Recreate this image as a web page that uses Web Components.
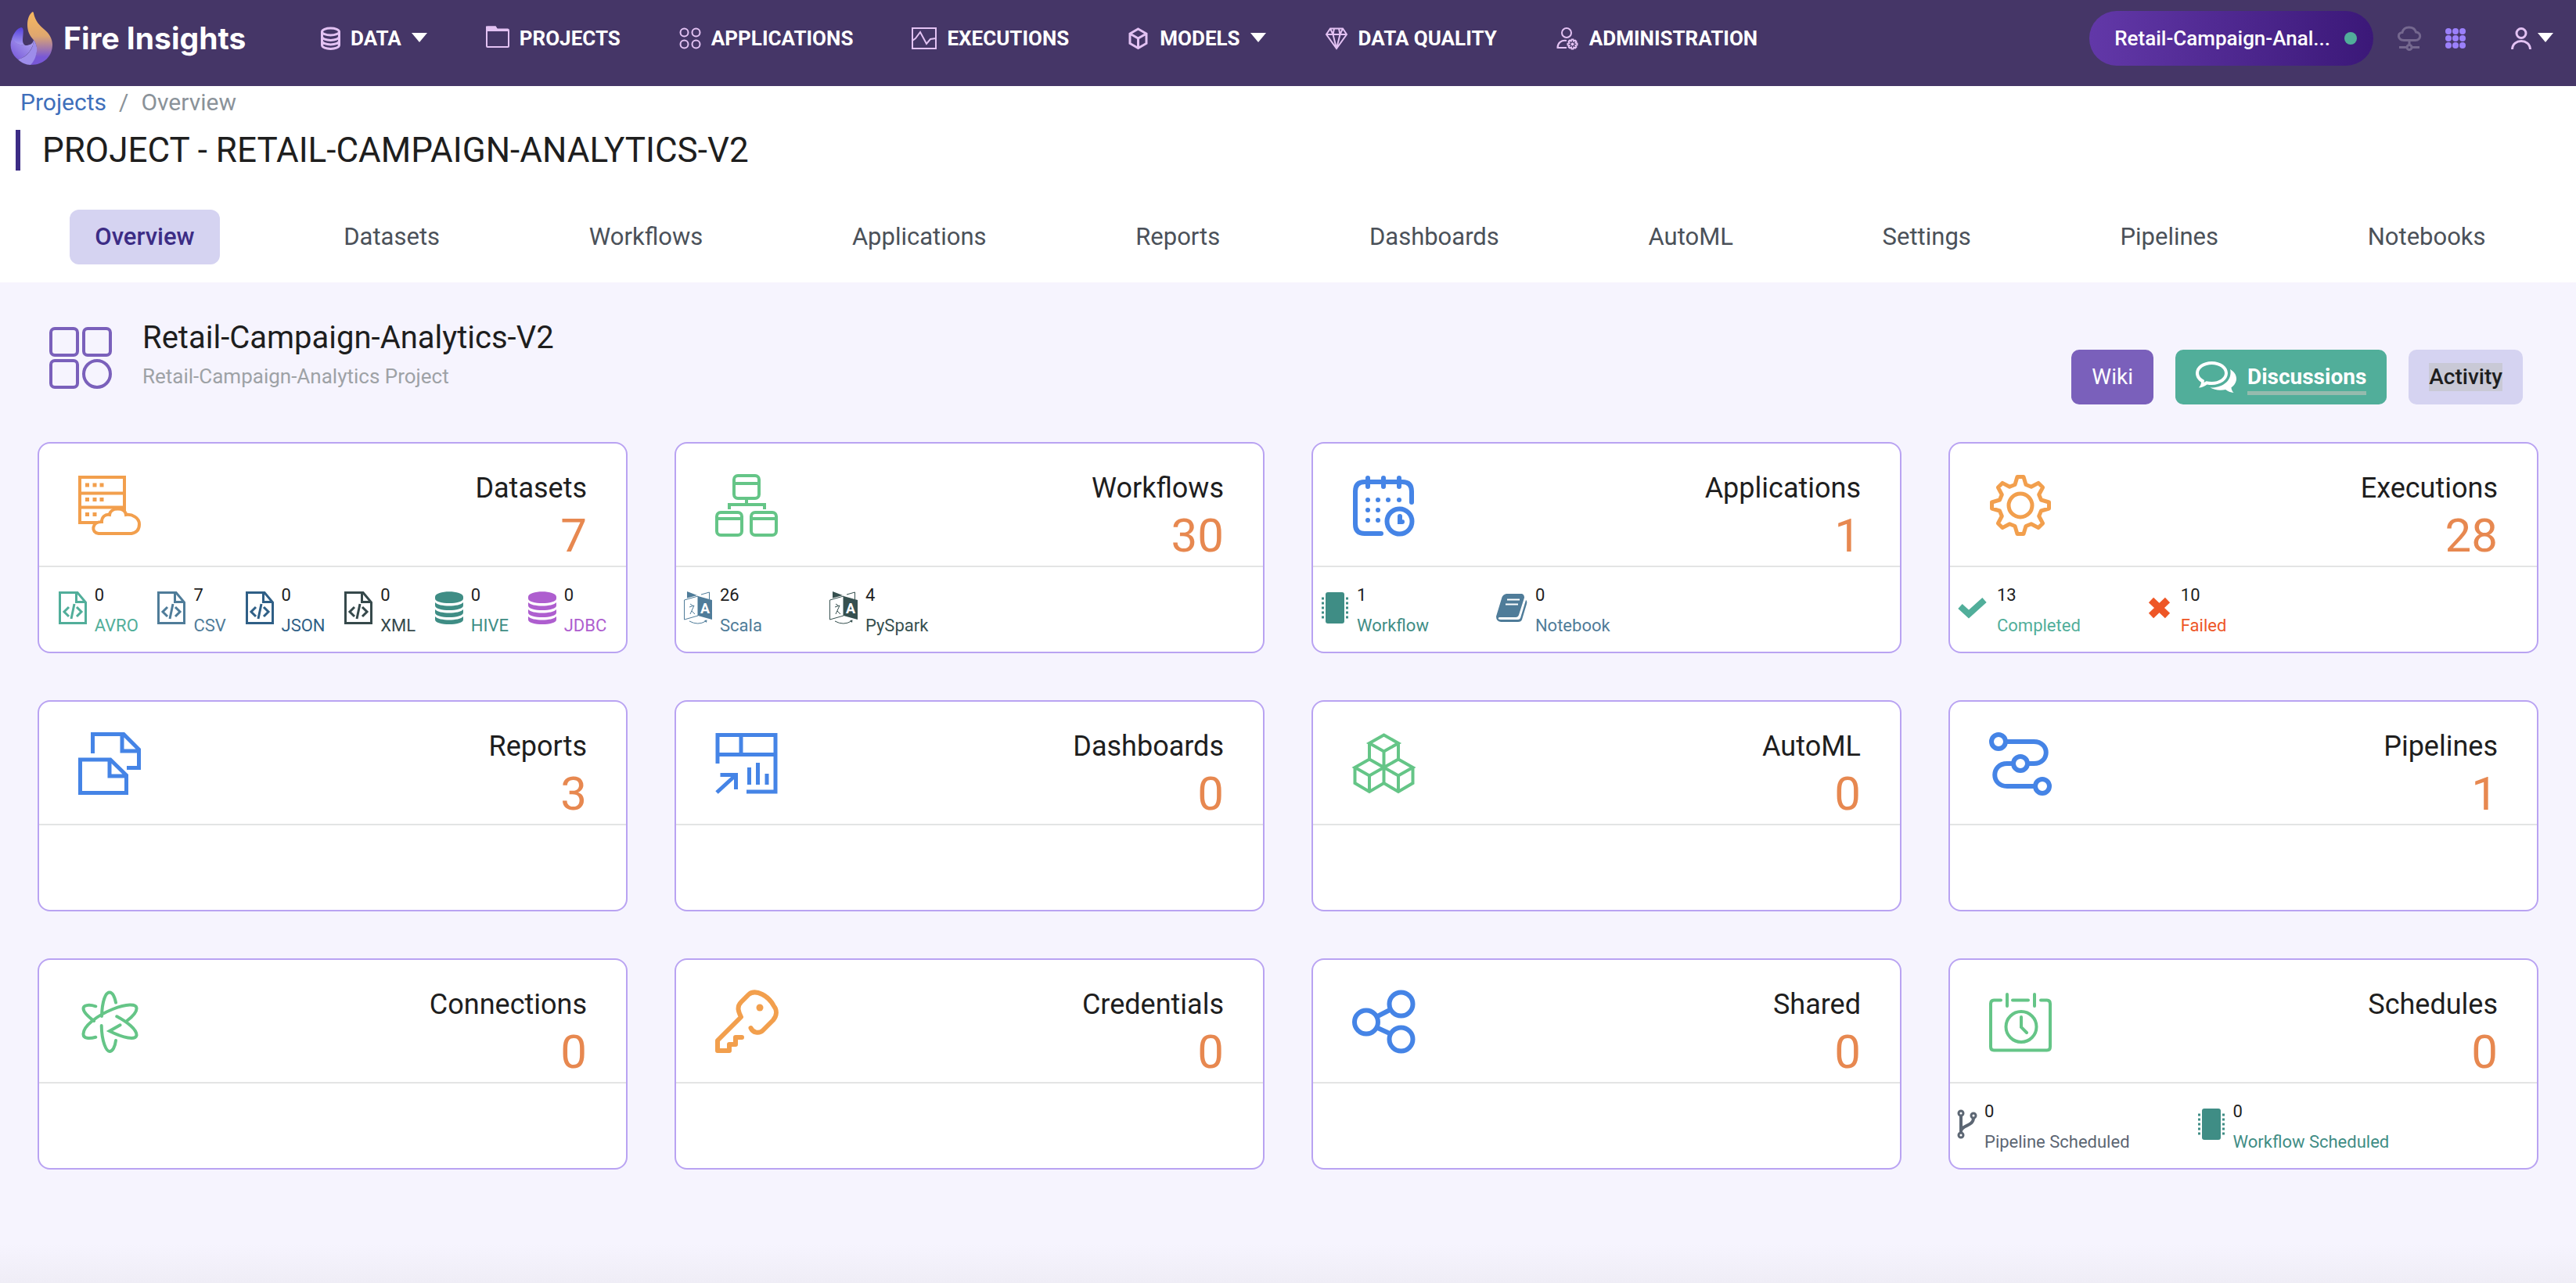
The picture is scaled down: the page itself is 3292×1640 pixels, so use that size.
<!DOCTYPE html>
<html lang="en">
<head>
<meta charset="utf-8">
<title>Fire Insights - Project Overview</title>
<style>
  html { height: 100%; }
  body { margin: 0; min-height: 100%; display: flex; flex-direction: column; background: #fff; color: #1e1e1e; font-family: Roboto, "Liberation Sans", sans-serif; }
  project-overview { flex: 1; }
</style>
</head>
<body>
<app-header>
  <nav-item slot="nav" icon="database" menu>DATA</nav-item>
  <nav-item slot="nav" icon="folder">PROJECTS</nav-item>
  <nav-item slot="nav" icon="apps">APPLICATIONS</nav-item>
  <nav-item slot="nav" icon="activity">EXECUTIONS</nav-item>
  <nav-item slot="nav" icon="cube" menu>MODELS</nav-item>
  <nav-item slot="nav" icon="diamond">DATA QUALITY</nav-item>
  <nav-item slot="nav" icon="admin">ADMINISTRATION</nav-item>
</app-header>
<page-heading parent="Projects" current="Overview">PROJECT - RETAIL-CAMPAIGN-ANALYTICS-V2</page-heading>
<tab-bar>
  <tab-link active>Overview</tab-link>
  <tab-link>Datasets</tab-link>
  <tab-link>Workflows</tab-link>
  <tab-link>Applications</tab-link>
  <tab-link>Reports</tab-link>
  <tab-link>Dashboards</tab-link>
  <tab-link>AutoML</tab-link>
  <tab-link>Settings</tab-link>
  <tab-link>Pipelines</tab-link>
  <tab-link>Notebooks</tab-link>
</tab-bar>
<project-overview name="Retail-Campaign-Analytics-V2" description="Retail-Campaign-Analytics Project">
  <summary-card icon="datasets" color="#f29f4d" label="Datasets" count="7" spread>
    <stat-item icon="file" color="#51ae9a" value="0">AVRO</stat-item>
    <stat-item icon="file" color="#4f7c99" value="7">CSV</stat-item>
    <stat-item icon="file" color="#2f5f86" value="0">JSON</stat-item>
    <stat-item icon="file" color="#36494b" value="0">XML</stat-item>
    <stat-item icon="stack" color="#3f8d85" value="0">HIVE</stat-item>
    <stat-item icon="stack" color="#ae5ecf" value="0">JDBC</stat-item>
  </summary-card>
  <summary-card icon="workflows" color="#65c587" label="Workflows" count="30">
    <stat-item icon="translate" color="#4f7c99" value="26">Scala</stat-item>
    <stat-item icon="translate" color="#36504f" value="4">PySpark</stat-item>
  </summary-card>
  <summary-card icon="applications" color="#4584e6" label="Applications" count="1">
    <stat-item icon="chip" color="#3f8d85" value="1">Workflow</stat-item>
    <stat-item icon="book" color="#4f7c99" value="0">Notebook</stat-item>
  </summary-card>
  <summary-card icon="gear" color="#f29f4d" label="Executions" count="28">
    <stat-item icon="check" color="#51ae9a" value="13">Completed</stat-item>
    <stat-item icon="cross" color="#ee5626" value="10">Failed</stat-item>
  </summary-card>
  <summary-card icon="reports" color="#4584e6" label="Reports" count="3"></summary-card>
  <summary-card icon="dashboards" color="#4584e6" label="Dashboards" count="0"></summary-card>
  <summary-card icon="automl" color="#65c587" label="AutoML" count="0"></summary-card>
  <summary-card icon="pipelines" color="#4584e6" label="Pipelines" count="1"></summary-card>
  <summary-card icon="connections" color="#65c587" label="Connections" count="0"></summary-card>
  <summary-card icon="key" color="#f29f4d" label="Credentials" count="0"></summary-card>
  <summary-card icon="shared" color="#4584e6" label="Shared" count="0"></summary-card>
  <summary-card icon="schedules" color="#65c587" label="Schedules" count="0">
    <stat-item icon="branch" color="#5c6673" value="0">Pipeline Scheduled</stat-item>
    <stat-item icon="chip" color="#3f8d85" value="0">Workflow Scheduled</stat-item>
  </summary-card>
</project-overview>

<script>
const dots = (xs, ys, r) => ys.map(y => xs.map(x => `<circle cx="${x}" cy="${y}" r="${r}" fill="currentColor" stroke="none"/>`).join('')).join('');

// Closed outline of an eight-toothed gear around (c, c).
const gear = (c, profile) => {
  const pts = [];
  for (let i = 0; i < 8; i++) {
    const a = i * Math.PI / 4, s = Math.sin(a), k = Math.cos(a);
    profile.forEach(([x, y]) => pts.push(`${(c + x * k - y * s).toFixed(1)} ${(c + x * s + y * k).toFixed(1)}`));
  }
  return `M${pts.join('L')}Z`;
};

// name: [width, height, stroke width, shapes]
const ICONS = {
  logo: [54, 68, 0, `<defs>
      <linearGradient id="f" x1="0" y1="0" x2="0" y2="1"><stop offset="0" stop-color="#f7b75e"/><stop offset=".45" stop-color="#dfa76f"/><stop offset=".85" stop-color="#7858d6"/></linearGradient>
      <linearGradient id="a" x1="0" y1="0" x2="0" y2="1"><stop offset="0" stop-color="#5440dc"/><stop offset="1" stop-color="#a89af0"/></linearGradient>
      <linearGradient id="b" x1="0" y1="1" x2="1" y2="0"><stop offset="0" stop-color="#7454d8"/><stop offset="1" stop-color="#b3a9f2"/></linearGradient></defs>
      <g stroke="none"><path fill="url(#f)" d="M28 .5C29.500 0 30 1 30 2C32 12 38 18 44 23C50 28 54 35 54 42C54 57 43 68 26 68C30 63 34 55 34 48C34 43 32 38 29 35C23 28 22 22 22 16C22 10 24 4 28 .5Z"/>
      <path fill="url(#a)" d="M2 35C4 28 9 21 14 20C17 20 17 24 16.500 29C16 36 15 40 19 43C12 43 5 40 2 35Z"/>
      <path fill="url(#b)" d="M2 35C6 40 14 43 20 43C25 43 29 41 30 36C30 46 22 58 10 61C3 56 -2 45 2 35Z"/>
      <path fill="#9d8dea" d="M30 36C33 40 35 46 34 51C33 58 30 64 26 68C20 68 14 65 10 61C22 58 30 47 30 36Z"/></g>`],
  database: [25, 30, 3, `<ellipse cx="12.500" cy="6.500" rx="11" ry="4.500"/><path d="M1.500 6.500V23.500C1.500 30 23.500 30 23.500 23.500V6.500M1.500 12.500C1.500 19 23.500 19 23.500 12.500M1.500 18C1.500 24.500 23.500 24.500 23.500 18"/>`],
  folder: [30, 30, 2, `<path d="M1 3V25Q1 26 2 26H28Q29 26 29 25V5Q29 3.500 28 3.500H14L12 .5H2Q1 .5 1 2Z"/><path fill="currentColor" d="M1 3.500V.5H12L14 4H28V5H1Z"/>`],
  apps: [28, 28, 2, `<circle cx="6.500" cy="6.500" r="5"/><circle cx="21.500" cy="6.500" r="5"/><circle cx="6.500" cy="21.500" r="5"/><circle cx="21.500" cy="21.500" r="5"/>`],
  activity: [32, 28, 2, `<path d="M1 1H31V27H1ZM1 17L5 14L11 6L19 21L24 15L31 14"/>`],
  cube: [28, 28, 3, `<path d="M13.500 2L24 8V20.500L13.500 26.500L3 20.500V8ZM3 8L13.500 14L24 8M13.500 14V26"/>`],
  diamond: [30, 28, 2, `<path d="M7 1.500H23L28 9L15 27L2 9ZM2 9H28M7 1.500L10.500 9L15 27L19.500 9L23 1.500M12 1.500L10.500 9M18 1.500L19.500 9"/>`],
  admin: [30, 28, 2, `<circle cx="14" cy="7" r="6"/><path d="M14 17C7 16 2.500 20 2.500 26H14"/><path d="${gear(21.5, [[-1, -6], [1, -6], [1.5, -4]])}"/><circle cx="21.500" cy="21.500" r="1"/>`],
  caret: [20, 12, 0, `<path fill="#fff" d="M0 -1H20L10 11Z"/>`],
  cloud: [32, 32, 3, `<path d="M9 18.500C1 18 0 9 7 8.500C9 0 22 0 24.500 8C32 8.500 31 18.500 24 18.500ZM16 19V24M3 27.500H12M20 27.500H29"/><circle cx="16" cy="27.500" r="3"/>`],
  grid: [26, 26, 0, dots([4, 13, 22], [4, 13, 22], 4)],
  user: [26, 28, 3, `<circle cx="13" cy="7.500" r="6"/><path d="M1.500 28C2 14 24 14 24.500 28"/>`],
  project: [80, 80, 4, `<rect x="2" y="2" width="34" height="34" rx="5"/><rect x="44" y="2" width="34" height="34" rx="5"/><rect x="2" y="43" width="34" height="34" rx="5"/><circle cx="61" cy="60" r="17"/>`],
  discuss: [52, 40, 0, `<path fill="#fff" stroke="none" fill-rule="evenodd" d="M20.500 0C32 0 41 6.500 41 15C41 23.500 32 30 20.500 30C18.500 30 16.500 29.800 14.500 29.400C11.500 31.800 8 33.300 4 33.500C6 31 7 29 7 26.500C2.500 23.700 0 19.500 0 15C0 6.500 9 0 20.500 0ZM20.500 4C11 4 4 9 4 15C4 18.500 6.500 21.500 11 24L10.500 27L13.500 25.300C16 25.800 18 26 20.500 26C30 26 37 21 37 15C37 9 30 4 20.500 4Z"/><path fill="#fff" stroke="none" d="M44 10C49 13 52 17 52 22C52 26.500 49.500 30.500 45.500 33.200C45.500 35.700 46.700 37.800 48.500 40C44.500 39.700 41 38.200 38.200 36C31 37.500 23.500 36.500 18.500 33.500C32 34 44 27 44.500 15C44.600 13 44.500 12 44 10Z"/>`],
  datasets: [80, 80, 4, `<path d="M2 4H59V62H2ZM2 24.500H59M2 42.500H59"/><path stroke="none" fill="currentColor" d="M9 11.500h5v5h-5zM18.500 11.500h5v5h-5zM27.500 11.500h5v5h-5zM9 30h5v5h-5zM18.500 30h5v5h-5zM27.500 30h5v5h-5zM9 49h5v5h-5zM18.500 49h5v5h-5z"/><path fill="#fff" d="M26 76C16 75 17 61 30 61C30 55 34 51 40 52C41 42 60 42 61 52C69 51 78 56 78 64C78 71 74 75 68 76Z"/>`],
  workflows: [80, 80, 4, `<rect x="24" y="2" width="32" height="29" rx="5"/><rect x="2" y="49" width="32" height="29" rx="5"/><rect x="46" y="49" width="32" height="29" rx="5"/><path d="M24 12H56M2 57H34M46 57H78M40 31V39M18 45V39H63V45"/>`],
  applications: [80, 80, 6, `<g stroke-linecap="round"><path d="M37 76H16Q4 76 4 64V22Q4 10 16 10H64Q76 10 76 22V36M20 5V16M40 5V16M60 5V16"/><path d="M61 54V61H64"/></g><circle cx="60.500" cy="60.500" r="16"/>${dots([20, 33], [33, 46, 59], 3)}${dots([46, 60], [33], 3)}`],
  gear: [80, 80, 5, `<path stroke-linejoin="round" d="${gear(40, [[-7, -26.5], [-4, -36.5], [4, -36.5], [7, -26.5]])}"/><circle cx="40" cy="40" r="15"/>`],
  reports: [80, 80, 5, `<path d="M18.500 27V2.500H58L77.500 22V45.500H62M56 2.500V24H77.500M2.500 35H41L61.500 55V77.500H2.500ZM40 35V56H61.500"/>`],
  dashboards: [80, 80, 5, `<path d="M3 40V3.500H77V76H40M3 28.500H77M33 3.500V28.500M43.500 45V67M54.500 39V67M66 53V67M6.500 54.500H29M26.500 54V73M2 77L26 55"/>`],
  automl: [80, 80, 4, `<path d="M40.500 3.500L59 14L40.500 24.500L22 14ZM22 14V34.500M59 14V34.500M40.500 24.500V65M22 34.500L40.500 45L22 55.500L3.500 45ZM59 34.500L77.500 45L59 55.500L40.500 45ZM3.500 45V65L22 76L40.500 65L59 76L77.500 65V45M22 55.500V76M59 55.500V76"/>`],
  pipelines: [80, 80, 6, `<circle cx="12" cy="12" r="9"/><circle cx="40" cy="40" r="9"/><circle cx="68" cy="69" r="9"/><path d="M21 12H57C78 12 78 40 57 40H49M31 40H23C2 40 2 69 23 69H59"/>`],
  connections: [80, 80, 4, `<path stroke-linecap="round" d="M48 15.500C46 6 43 2.500 40 2.500C35 2.500 30.500 13 30 33M29.700 45C30 66 36 78 40 78C44 78 47 72 48 64M22.300 59.700C14 62 6.500 61.500 6.500 56C6 46 24 32 44 24C62 17 74 17 74.500 22.500C75 27 70 33 62 39M22.300 20.300C13 17.500 6.500 19 6.500 23C6.500 28 12 33 20 39M49.300 33.300C62 40 75 50 74.500 57.500C73 64 58 61 40 52L53.500 44.300"/>`],
  key: [80, 80, 6, `<path stroke-linecap="round" stroke-linejoin="round" d="M45.500 48C48 54 56 56 61 51L74 38C79 32 79 25 75 20C72 14 66 8 60 5C54 2 48 1 43 5L33 15C27 21 30 28 33 34L3 64V77H18V69H26V60H34"/><circle cx="57" cy="22" r="4.500" fill="currentColor" stroke="none"/>`],
  shared: [80, 80, 6, `<circle cx="18" cy="40.500" r="15"/><circle cx="62.500" cy="17.500" r="15"/><circle cx="62.500" cy="62.500" r="15"/><path d="M31.500 33.500L49 24.500M31.500 47.500L49 55.500"/>`],
  schedules: [80, 80, 4, `<path stroke-linecap="round" d="M15 12.500H6Q2 12.500 2 17V72Q2 76.500 6 76.500H74Q78 76.500 78 72V17Q78 12.500 74 12.500H66M30 12.500H50M23 5V20M58 5V20M41 34V47L48 54"/><circle cx="41" cy="46.500" r="19.500"/>`],
  file: [36, 42, 3, `<path d="M1.500 1.500H24L34.500 14V40.500H1.500ZM22.500 1.500V13.500H34.500M13 20L7 26L13 32M23 20L29 26L23 32M20 16L16 35"/>`],
  stack: [36, 42, 0, `<g fill="currentColor" stroke="none"><path d="M0 7C0-2 36-2 36 7V9C36 17 0 17 0 9Z"/><path d="M0 14C5 20 31 20 36 14V18C36 26 0 26 0 18Z"/><path d="M0 23C5 29 31 29 36 23V27C36 35 0 35 0 27Z"/><path d="M0 32C5 38 31 38 36 32V36C36 44 0 44 0 36Z"/></g>`],
  translate: [36, 42, 1, `<path d="M.5 11L18 6V31L.5 36ZM22 4L32.500 1V10M7 38Q18 44 28 38M8 16L11 18M7 20L13 18L8 29M10 25L14 29"/><path stroke="none" fill="currentColor" d="M4 0L17 5L4 8.500ZM18 6L36 11V36L18 31ZM26 37L29.500 36.500L29 40Z"/><text x="27" y="28" text-anchor="middle" font-size="18" font-weight="700" fill="#fff" stroke="none">A</text>`],
  chip: [36, 40, 3, `<rect x="6" y="0" width="24" height="40" rx="3" fill="currentColor" stroke="none"/><path d="M1 8H4M1 14H4M1 20H4M1 26H4M1 32H4M32 8H35M32 14H35M32 20H35M32 26H35M32 32H35"/>`],
  book: [40, 36, 0, `<path fill="currentColor" stroke="none" d="M13 0H33Q36 1 36 5L29 27Q28 30 25 30H5Q2 30 3 32Q3 33 6 33H28Q30 33 31 31L38 8Q40 9 39 13L33 33Q32 36 28 36H6Q0 35 0 29L7 6Q8 1 13 0Z"/><path fill="none" stroke="#fff" stroke-width="2" d="M14 7.500H30M12 13.500H28"/>`],
  check: [40, 28, 8, `<path d="M3 12L14 22L34 4"/>`],
  cross: [32, 28, 9, `<path d="M4 4L25 24M25 4L4 24"/>`],
  branch: [24, 38, 3, `<circle cx="4" cy="5" r="3"/><circle cx="20" cy="8" r="3"/><circle cx="4" cy="33" r="3"/><path stroke-width="4" d="M4 8V30M20 11C20 22 4 20 4 28"/>`]
};

class ShadowElement extends HTMLElement {
  connectedCallback() {
    if (!this.shadowRoot) this.attachShadow({ mode: 'open' }).innerHTML = this.render();
  }
  attr(name) { return this.getAttribute(name) || ''; }
}

customElements.define('ui-icon', class extends ShadowElement {
  render() {
    const [w, h, stroke, shapes] = ICONS[this.attr('name')];
    return `<style>:host{display:block;flex:none}svg{display:block;overflow:visible}</style>
      <svg width="${w}" height="${h}" viewBox="0 0 ${w} ${h}" fill="none" stroke="currentColor" stroke-width="${stroke}" aria-hidden="true">${shapes}</svg>`;
  }
});

customElements.define('nav-item', class extends ShadowElement {
  render() {
    const menu = this.hasAttribute('menu');
    const inner = `<ui-icon name="${this.attr('icon')}"></ui-icon><span><slot></slot></span>${menu ? '<ui-icon name="caret"></ui-icon>' : ''}`;
    return `<style>
      :host{display:block}
      a,button{display:flex;align-items:center;gap:13px;margin:0;padding:0;border:0;background:none;font:700 26px/32px Roboto,sans-serif;color:#fff;text-decoration:none;white-space:nowrap}
      ui-icon{color:#e3c2f3}
    </style>${menu ? `<button type="button">${inner}</button>` : `<a href="#">${inner}</a>`}`;
  }
});

customElements.define('app-header', class extends ShadowElement {
  render() {
    return `<style>
      :host{display:block}
      header{display:flex;align-items:center;padding:14px 29px 26px 13px;height:70px;background:#453667;color:#fff}
      .brand{display:flex;align-items:center;gap:14px;color:#fff;text-decoration:none;font:700 39px/48px Inter,sans-serif;white-space:nowrap;width:397px}
      nav{display:flex;align-items:center;gap:75px}
      .tools{display:flex;align-items:center;margin-left:auto;gap:30px}
      button{display:flex;align-items:center;margin:0;padding:0;border:0;background:none;color:inherit}
      .project{gap:18px;height:70px;padding:0 21px 0 32px;border-radius:35px;background:linear-gradient(90deg,#6238a8,#3b1878);font:500 26px/32px Roboto,sans-serif;white-space:nowrap}
      .dot{width:16px;height:16px;border-radius:8px;background:#51ae9a}
      .cloud{color:#75688f}
      .grid{color:#9b80fb}
      .user{gap:8px;margin-left:28px;color:#e3c2f3}
    </style>
    <header>
      <a class="brand" href="#"><ui-icon name="logo"></ui-icon><span>Fire Insights</span></a>
      <nav><slot name="nav"></slot></nav>
      <div class="tools">
        <button type="button" class="project"><span>Retail-Campaign-Anal...</span><span class="dot"></span></button>
        <button type="button" class="cloud" aria-label="Cloud"><ui-icon name="cloud"></ui-icon></button>
        <button type="button" class="grid" aria-label="Apps"><ui-icon name="grid"></ui-icon></button>
        <button type="button" class="user" aria-label="Account"><ui-icon name="user"></ui-icon><ui-icon name="caret"></ui-icon></button>
      </div>
    </header>`;
  }
});

customElements.define('page-heading', class extends ShadowElement {
  render() {
    return `<style>
      :host{display:block;padding:3px 20px 0}
      nav{display:flex;gap:16px;padding-left:6px;font-size:30px;line-height:36px;color:#8a9299}
      a{color:#3f6fbb;text-decoration:none}
      h1{margin:17px 0 0;padding-left:28px;border-left:6px solid #3c2c85;font-size:44px;line-height:52px;font-weight:400}
    </style>
    <nav aria-label="Breadcrumb"><a href="#">${this.attr('parent')}</a><span>/</span><span>${this.attr('current')}</span></nav>
    <h1><slot></slot></h1>`;
  }
});

customElements.define('tab-bar', class extends ShadowElement {
  render() {
    return `<style>
      :host{display:block}
      nav{display:flex;justify-content:space-around;padding:50px 20px 23px 26px}
    </style><nav aria-label="Project sections"><slot></slot></nav>`;
  }
});

customElements.define('tab-link', class extends ShadowElement {
  render() {
    return `<style>
      :host{display:block}
      a{display:block;padding:0 32px;border-radius:12px;font-size:31px;line-height:70px;color:#4b5159;text-decoration:none}
      :host([active]) a{background:#d5d3f1;color:#3c2c85;font-weight:500}
    </style><a href="#"><slot></slot></a>`;
  }
});

customElements.define('project-overview', class extends ShadowElement {
  render() {
    return `<style>
      :host{display:block;padding:47px 48px 60px;background:linear-gradient(to top,#efedf6,#f6f4fe 50px)}
      .head{display:flex;align-items:flex-start}
      .head ui-icon{color:#7a60bb}
      .head > ui-icon{margin:10px 39px 0 15px}
      h2{margin:0 0 9px;font-size:40px;line-height:48px;font-weight:400}
      p{margin:0;font-size:26px;line-height:32px;color:#9ea2a6}
      .actions{display:flex;gap:28px;margin:39px 20px 0 auto}
      button{display:flex;align-items:center;gap:14px;height:70px;margin:0;padding:0 26px;border:0;border-radius:10px;font:500 28px/36px Roboto,sans-serif;color:#fff;background:#7a60bb}
      .wiki{font-weight:400}
      .talk{background:#51ae9a;font-weight:700}
      .talk span{border-bottom:5px solid #95bbae;margin-top:4px}
      .activity{background:#d5d3f1;color:#1e1e1e}
      .activity span{background:#c9c9d6}
      .grid{display:grid;grid-template-columns:repeat(4,1fr);gap:60px;margin-top:48px}
    </style>
    <div class="head">
      <ui-icon name="project"></ui-icon>
      <div><h2>${this.attr('name')}</h2><p>${this.attr('description')}</p></div>
      <div class="actions">
        <button type="button" class="wiki">Wiki</button>
        <button type="button" class="talk"><ui-icon name="discuss"></ui-icon><span>Discussions</span></button>
        <button type="button" class="activity"><span>Activity</span></button>
      </div>
    </div>
    <div class="grid"><slot></slot></div>`;
  }
});

customElements.define('summary-card', class extends ShadowElement {
  render() {
    return `<style>
      :host{display:block;box-sizing:border-box;border:2px solid #b9a3f2;border-radius:16px;background:#fff;overflow:hidden}
      .top{display:flex;align-items:flex-start;justify-content:space-between;box-sizing:border-box;height:158px;padding:35px 50px 0;border-bottom:2px solid #e3e4e4}
      .top ui-icon{margin-top:4px;color:${this.attr('color')}}
      .text{text-align:right}
      h3{margin:0 0 3px;font-size:36px;line-height:44px;font-weight:400}
      .count{font-size:60px;line-height:72px;color:#e78850}
      .stats{display:flex;align-items:flex-start;gap:86px;box-sizing:border-box;height:108px;padding:23px 10px 0}
      :host([spread]) .stats{justify-content:space-evenly;gap:0;padding:23px 0 0}
    </style>
    <div class="top"><ui-icon name="${this.attr('icon')}"></ui-icon><div class="text"><h3>${this.attr('label')}</h3><div class="count">${this.attr('count')}</div></div></div>
    <div class="stats"><slot></slot></div>`;
  }
});

customElements.define('stat-item', class extends ShadowElement {
  render() {
    return `<style>
      :host{display:flex;align-items:center;gap:10px;font-size:22px;line-height:26px;white-space:nowrap}
      ui-icon{margin-bottom:8px}
      ui-icon,.label{color:${this.attr('color')}}
      .label{margin-top:13px}
    </style>
    <ui-icon name="${this.attr('icon')}"></ui-icon>
    <div><div>${this.attr('value')}</div><div class="label"><slot></slot></div></div>`;
  }
});
</script>
</body>
</html>
